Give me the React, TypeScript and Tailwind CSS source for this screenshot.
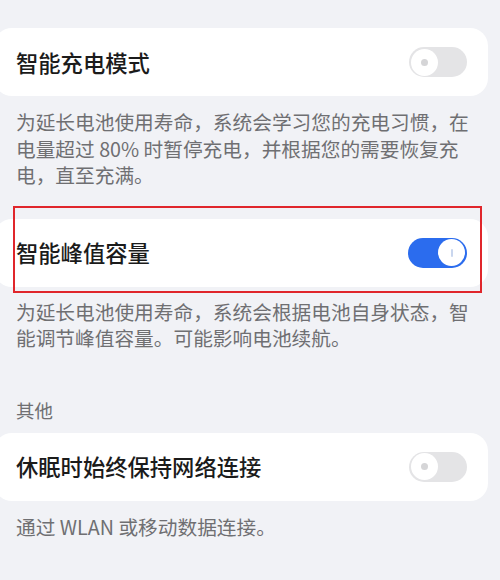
import React from "react";

const font = { fontFamily: '"Noto Sans CJK SC", "Noto Sans", sans-serif' };

function Toggle({ on }: { on: boolean }) {
  if (on) {
    return (
      <div className="flex h-[30px] w-[59px] items-center justify-end rounded-full bg-[#2b6cee] pr-[2px]">
        <div className="flex h-[27px] w-[27px] items-center justify-center rounded-full bg-white">
          <div className="h-[8px] w-[2px] rounded-full bg-[#c9d6ee]" />
        </div>
      </div>
    );
  }
  return (
    <div className="flex h-[30px] w-[58px] items-center rounded-full bg-[#e4e4e6] pl-[2px]">
      <div className="flex h-[27px] w-[27px] items-center justify-center rounded-full bg-white">
        <div className="h-[7px] w-[7px] rounded-full bg-[#d5d5d7]" />
      </div>
    </div>
  );
}

function Card({ title, on }: { title: string; on: boolean }) {
  return (
    <div className="ml-[-6px] flex h-[68px] w-[494px] items-center justify-between rounded-[18px] bg-white pl-[22px] pr-[21px]">
      <span className="text-[22.3px] font-medium leading-none text-[#1b1b1b]">{title}</span>
      <Toggle on={on} />
    </div>
  );
}

function Desc({ lines }: { lines: string[] }) {
  return (
    <div className="pl-[16px] text-[19.7px] leading-[26.5px] text-[#6f6f72]">
      {lines.map((l, i) => (
        <div key={i} className="whitespace-nowrap">
          {l}
        </div>
      ))}
    </div>
  );
}

export default function App() {
  return (
    <div className="h-[580px] w-[500px] overflow-hidden bg-[#f1f2f6]" style={font}>
      <div className="flex flex-col pt-[28px]">
        <Card title="智能充电模式" on={false} />
        <div className="mt-[13px]">
          <Desc
            lines={[
              "为延长电池使用寿命，系统会学习您的充电习惯，在",
              "电量超过 80% 时暂停充电，并根据您的需要恢复充",
              "电，直至充满。",
            ]}
          />
        </div>
        <div className="relative mt-[30px]">
          <Card title="智能峰值容量" on={true} />
          <div className="pointer-events-none absolute left-[13px] top-[-13px] h-[87px] w-[469px] border-2 border-[#e0262b]" />
        </div>
        <div className="mt-[12px]">
          <Desc
            lines={[
              "为延长电池使用寿命，系统会根据电池自身状态，智",
              "能调节峰值容量。可能影响电池续航。",
            ]}
          />
        </div>
        <div className="mt-[45px] pl-[16px] text-[18.5px] leading-[26px] text-[#6f6f72]">其他</div>
        <div className="mt-[10px]">
          <Card title="休眠时始终保持网络连接" on={false} />
        </div>
        <div className="mt-[13px]">
          <Desc lines={["通过 WLAN 或移动数据连接。"]} />
        </div>
      </div>
    </div>
  );
}
